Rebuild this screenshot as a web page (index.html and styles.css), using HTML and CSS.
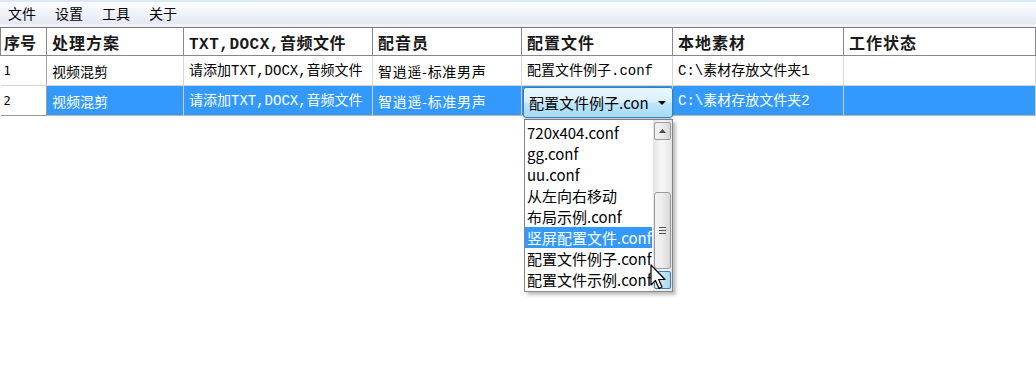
FILE: index.html
```html
<!DOCTYPE html>
<html lang="zh-CN">
<head>
    <meta charset="UTF-8">
    <title>视频混剪</title>
    <link rel="stylesheet" href="styles.css">
</head>
<body>
    <div class="menubar">
        <span class="menu-item">文件</span>
        <span class="menu-item">设置</span>
        <span class="menu-item">工具</span>
        <span class="menu-item">关于</span>
    </div>

    <table class="grid">
        <colgroup>
            <col style="width:46px">
            <col style="width:137px">
            <col style="width:189px">
            <col style="width:149px">
            <col style="width:151px">
            <col style="width:171px">
            <col>
        </colgroup>
        <thead>
            <tr>
                <th>序号</th>
                <th>处理方案</th>
                <th class="mono">TXT,DOCX,音频文件</th>
                <th>配音员</th>
                <th>配置文件</th>
                <th>本地素材</th>
                <th>工作状态</th>
            </tr>
        </thead>
        <tbody>
            <tr>
                <td class="num">1</td>
                <td>视频混剪</td>
                <td class="mono">请添加TXT,DOCX,音频文件</td>
                <td class="wide">智逍遥-标准男声</td>
                <td class="mono">配置文件例子.conf</td>
                <td class="mono">C:\素材存放文件夹1</td>
                <td></td>
            </tr>
            <tr class="selected">
                <td class="num">2</td>
                <td>视频混剪</td>
                <td class="mono">请添加TXT,DOCX,音频文件</td>
                <td class="wide">智逍遥-标准男声</td>
                <td class="combo-cell">
                    <div class="combo">
                        <span class="combo-text">配置文件例子.con</span>
                        <span class="combo-arrow"></span>
                    </div>
                </td>
                <td class="mono">C:\素材存放文件夹2</td>
                <td></td>
            </tr>
        </tbody>
    </table>

    <div class="dropdown">
        <ul class="options">
            <li>720x404.conf</li>
            <li>gg.conf</li>
            <li>uu.conf</li>
            <li>从左向右移动</li>
            <li>布局示例.conf</li>
            <li class="active">竖屏配置文件.conf</li>
            <li>配置文件例子.conf</li>
            <li>配置文件示例.conf</li>
        </ul>
        <div class="scrollbar">
            <div class="sb-btn">
                <svg width="7" height="4" viewBox="0 0 7 4"><path d="M0 4 L3.5 0 L7 4 Z" fill="#4d4d4d"/></svg>
            </div>
            <div class="sb-track"></div>
            <div class="sb-thumb">
                <span class="grip"></span>
                <span class="grip"></span>
                <span class="grip"></span>
            </div>
            <div class="sb-btn sb-down"></div>
        </div>
    </div>

    <svg class="cursor" width="20" height="28" viewBox="0 0 20 28">
        <path d="M1 1 L1 21 L5.5 16.5 L9 24.5 L12 23 L8.7 15.5 L15 15.5 Z" fill="#fff" stroke="#000" stroke-width="1.2" stroke-linejoin="round"/>
    </svg>
</body>
</html>
```

FILE: styles.css
```css
html,
body {
    height: 100%;
}

body {
    margin: 0;
    min-height: 386px;
    background: #fff;
    font-family: "Noto Sans CJK SC", sans-serif;
    color: #000;
    position: relative;
}

.menubar {
    height: 22px;
    border-top: 2px solid #dde7f5;
    background: linear-gradient(#fbfcfe 0%, #eef1f8 60%, #e3e8f3 100%);
    display: flex;
    align-items: center;
    padding-left: 8px;
    gap: 19px;
    font-size: 14px;
    border-bottom: 3px solid #f0f2f7;
}

.menu-item {
    line-height: 20px;
}

.grid {
    width: 1036px;
    border-collapse: collapse;
    table-layout: fixed;
}

.grid th {
    height: 27px;
    padding: 0 5px;
    text-align: left;
    font-size: 16px;
    letter-spacing: 1px;
    font-weight: bold;
    color: #1a1a1a;
    border: 1px solid #888;
    border-top: 1px solid #777;
    white-space: nowrap;
    overflow: hidden;
}

.grid th:first-child {
    padding-left: 3px;
    letter-spacing: 0;
}

.grid td {
    height: 29px;
    padding: 0 5px;
    font-size: 14px;
    border: 1px solid #d6d6d6;
    white-space: nowrap;
    overflow: hidden;
    line-height: 16px;
}

.grid td:first-child {
    border-left: none;
    border-right: 1px solid #a8a8a8;
}

.grid .num {
    font-family: "DejaVu Sans Mono", monospace;
    font-size: 12px;
    padding-left: 3px;
}

.grid .mono {
    font-family: "Liberation Mono", "Noto Sans CJK SC", monospace;
}

.grid th.mono {
    letter-spacing: 0.5px;
}

.grid .wide {
    letter-spacing: 0.7px;
}

.selected td {
    background: #3399ff;
    color: #fff;
    border-color: #d0d0d0;
    border-bottom-color: #b8b8b8;
}

.selected td:first-child {
    background: #fff;
    color: #000;
    border-bottom: 1px solid #999;
    border-right: 1px solid #999;
}

.grid td.combo-cell {
    position: relative;
    overflow: visible;
}

.combo {
    position: absolute;
    left: 1px;
    top: 1px;
    width: 150px;
    height: 31px;
    box-sizing: border-box;
    border: 1px solid #3c7fb1;
    border-radius: 3px;
    background: linear-gradient(#eaf6fd 0%, #d9f0fc 48%, #bee6fd 52%, #a7d9f5 100%);
    box-shadow: 0 1px 2px rgba(0, 0, 0, 0.25);
    display: flex;
    align-items: center;
    padding-left: 5px;
    color: #000;
    font-size: 15px;
    z-index: 3;
}

.combo-text {
    flex: 1;
    white-space: nowrap;
}

.combo-arrow {
    width: 0;
    height: 0;
    margin-right: 6px;
    border-left: 4px solid transparent;
    border-right: 4px solid transparent;
    border-top: 4px solid #000;
}

.dropdown {
    position: absolute;
    left: 524px;
    top: 119px;
    width: 149px;
    height: 173px;
    box-sizing: border-box;
    border: 1px solid #828790;
    background: #fff;
    box-shadow: 3px 3px 3px rgba(0, 0, 0, 0.25);
    display: flex;
    color: #000;
    z-index: 2;
}

.options {
    list-style: none;
    margin: 0;
    padding: 2px 0 0 0;
    width: 128px;
    overflow: hidden;
    font-size: 15px;
}

.options li {
    height: 21px;
    line-height: 21px;
    padding-left: 2px;
    white-space: nowrap;
}

.options li.active {
    background: #3399ff;
    color: #fff;
}

.scrollbar {
    width: 19px;
    margin-left: 1px;
    display: flex;
    flex-direction: column;
    background: linear-gradient(90deg, #e4e4e4, #f4f4f4 40%, #f4f4f4 60%, #e4e4e4);
    padding: 2px 0;
    box-sizing: border-box;
}

.sb-btn {
    height: 18px;
    flex: none;
    margin: 0 1px;
    box-sizing: border-box;
    border: 1px solid #9a9a9a;
    border-radius: 2px;
    background: linear-gradient(90deg, #f2f2f2, #ebebeb 50%, #d6d6d6);
    display: flex;
    align-items: center;
    justify-content: center;
}

.sb-down {
    border-color: #3c7fb1;
    background: linear-gradient(90deg, #e3f4fc, #c4e5f6 50%, #a9d9f2);
}

.sb-track {
    height: 52px;
    flex: none;
}

.sb-thumb {
    flex: 1;
    margin: 0 1px 2px;
    border: 1px solid #9a9a9a;
    border-radius: 3px;
    background: linear-gradient(90deg, #f2f2f2, #ebebeb 50%, #d6d6d6);
    display: flex;
    flex-direction: column;
    align-items: center;
    justify-content: center;
    gap: 2px;
}

.grip {
    width: 7px;
    height: 1px;
    background: #555;
}

.cursor {
    position: absolute;
    left: 650px;
    top: 264px;
    z-index: 4;
}
```
